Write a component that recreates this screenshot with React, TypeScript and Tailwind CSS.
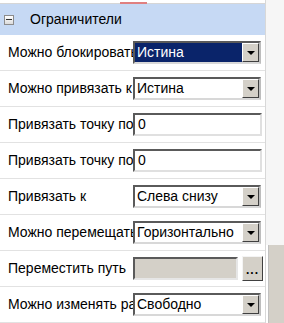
const font = { fontFamily: '"Liberation Sans", Arial, sans-serif' };

function DropButton() {
  return (
    <div className="ml-auto flex h-[19px] w-[17px] shrink-0 items-center justify-center border border-t-white border-l-white border-r-[#404040] border-b-[#404040] bg-[#d4d0c8]">
      <div className="h-0 w-0 border-x-[4px] border-t-[4px] border-x-transparent border-t-black" />
    </div>
  );
}

function Select({ value, active }: { value: string; active?: boolean }) {
  return (
    <div className="flex h-[23px] w-[128px] items-center border-2 border-t-[#5a5a5a] border-l-[#5a5a5a] border-r-[#bdbdbd] border-b-[#d8d8d8] bg-white">
      <div
        className={
          active
            ? "flex h-full flex-1 items-center overflow-hidden whitespace-nowrap bg-[#0a246a] pl-[2px] text-white"
            : "flex h-full flex-1 items-center overflow-hidden whitespace-nowrap pl-[2px] text-black"
        }
      >
        {value}
      </div>
      <DropButton />
    </div>
  );
}

function Input({ value }: { value: string }) {
  return (
    <div className="flex h-[23px] w-[129px] items-center border-2 border-t-[#5a5a5a] border-l-[#5a5a5a] border-r-[#e0e0e0] border-b-[#e0e0e0] bg-white pl-[3px]">
      {value}
    </div>
  );
}

function PathInput() {
  return (
    <div className="flex w-[130px] items-center">
      <div className="h-[23px] w-[105px] border-2 border-t-[#5a5a5a] border-l-[#5a5a5a] border-r-[#e6e6e6] border-b-[#e6e6e6] bg-[#d4d0c8]" />
      <div className="ml-[4px] flex h-[25px] w-[21px] items-end justify-center border border-t-[#f4f4f4] border-l-[#f4f4f4] border-r-[#404040] border-b-[#404040] bg-[#d4d0c8] pb-[4px] text-[12px] font-bold leading-none tracking-[1px]">
        ...
      </div>
    </div>
  );
}

const rows: { label: string; control: React.ReactNode }[] = [
  { label: "Можно блокировать", control: <Select value="Истина" active /> },
  { label: "Можно привязать к", control: <Select value="Истина" /> },
  { label: "Привязать точку по X", control: <Input value="0" /> },
  { label: "Привязать точку по Y", control: <Input value="0" /> },
  { label: "Привязать к", control: <Select value="Слева снизу" /> },
  { label: "Можно перемещать", control: <Select value="Горизонтально" /> },
  { label: "Переместить путь", control: <PathInput /> },
  { label: "Можно изменять размер", control: <Select value="Свободно" /> },
];

export default function App() {
  return (
    <div className="flex h-[323px] w-[284px] overflow-hidden bg-white text-[14px] text-black" style={font}>
      <div className="flex w-[265px] shrink-0 flex-col">
        <div className="relative h-[4px] border-b border-[#d6d6d6]">
          <div className="absolute left-[120px] top-[2px] h-[2px] w-[27px] bg-[#e08080]" />
        </div>
        <div className="flex h-[31px] items-center bg-[#c6d9f4] pl-[4px]">
          <div className="flex h-[10px] w-[10px] items-center justify-center border border-[#8c8c8c] bg-gradient-to-b from-white to-[#dcdcdc]">
            <div className="h-[1px] w-[6px] bg-[#333]" />
          </div>
          <span className="ml-[16px]">Ограничители</span>
        </div>
        {rows.map((r) => (
          <div key={r.label} className="flex h-[36px] shrink-0 items-center border-b border-[#e2e2e2]">
            <div className="w-[133px] shrink-0 overflow-hidden whitespace-nowrap pl-[8px]">{r.label}</div>
            {r.control}
          </div>
        ))}
      </div>
      <div className="flex flex-1 flex-col border-l border-[#d8d8d8]">
        <div className="h-[245px] bg-[#f6f6f6]" />
        <div className="flex flex-1 bg-white pl-[2px]">
          <div className="flex-1 border-l border-[#c0c0c0] bg-[#d4d0c8]" />
        </div>
      </div>
    </div>
  );
}
